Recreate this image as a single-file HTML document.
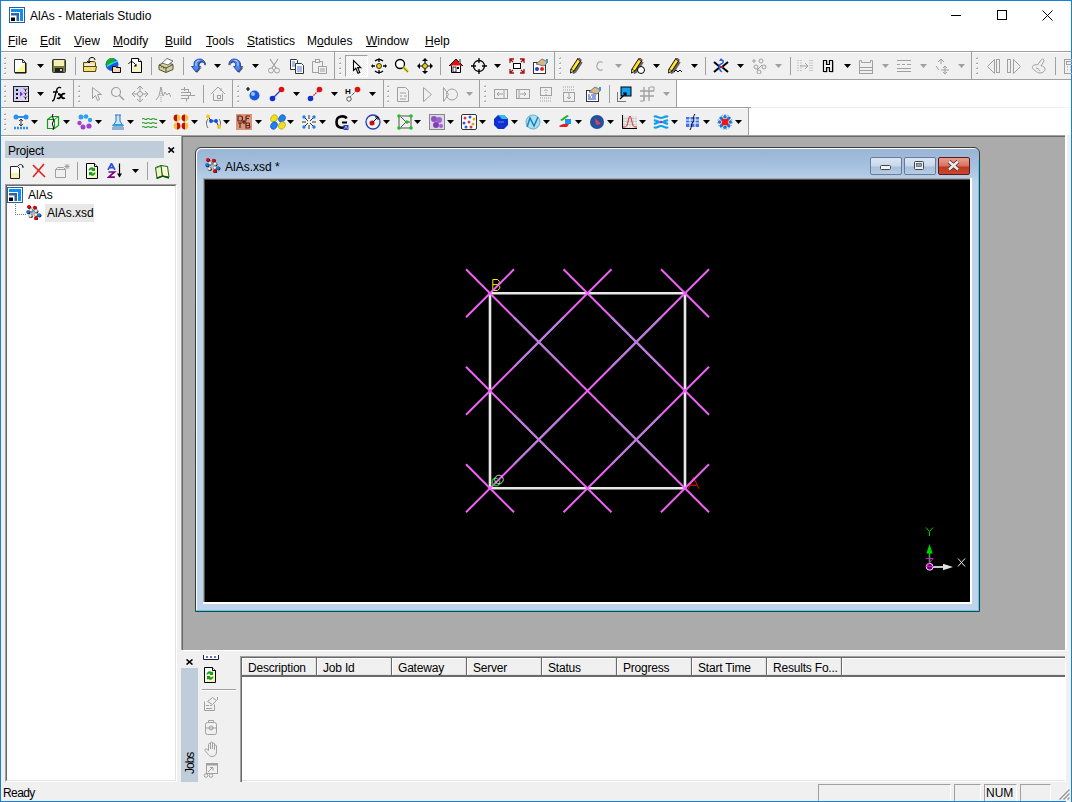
<!DOCTYPE html>
<html><head><meta charset="utf-8"><style>
html,body{margin:0;padding:0;width:1072px;height:802px;overflow:hidden;font-family:"Liberation Sans", sans-serif;}
u{text-decoration:underline;text-underline-offset:1px}
</style></head><body>
<div style="position:absolute;left:0px;top:0px;width:1072px;height:802px;background:#f0f0f0"></div><div style="position:absolute;left:1px;top:1px;width:1070px;height:50px;background:#fff"></div><div style="position:absolute;left:0px;top:0px;width:1072px;height:1px;background:#1a7fd6"></div><div style="position:absolute;left:0px;top:0px;width:1px;height:802px;background:#1a7fd6"></div><div style="position:absolute;left:1071px;top:0px;width:1px;height:802px;background:#1a7fd6"></div><div style="position:absolute;left:0px;top:801px;width:1072px;height:1px;background:#1a7fd6"></div><svg style="position:absolute;left:9px;top:7px;" width="16" height="16" viewBox="0 0 16 16"><rect x="0.5" y="0.5" width="15" height="15" fill="#fff" stroke="#2a5b9a"/><path d="M2 2H14V14H11V5H2Z" fill="#0e8ef2"/><path d="M2 6H10V14H7.5V8.5H2Z" fill="#2a64a8"/><path d="M2 10.5H6V14H2Z" fill="#000"/></svg><div style="position:absolute;left:30px;top:9px;font-size:12px;line-height:15px;color:#000;white-space:nowrap;">AlAs - Materials Studio</div><svg style="position:absolute;left:951px;top:9px;" width="12" height="12" viewBox="0 0 12 12"><path d="M0 6.5h10" stroke="#000" stroke-width="1"/></svg><svg style="position:absolute;left:997px;top:10px;" width="12" height="12" viewBox="0 0 12 12"><rect x="0.5" y="0.5" width="9" height="9" fill="none" stroke="#000"/></svg><svg style="position:absolute;left:1042px;top:10px;" width="12" height="12" viewBox="0 0 12 12"><path d="M0.5 0.5l10 10M10.5 0.5l-10 10" stroke="#000" stroke-width="1"/></svg><div style="position:absolute;left:8px;top:34px;font-size:12px;line-height:15px;color:#000;white-space:nowrap;"><u>F</u>ile</div><div style="position:absolute;left:40px;top:34px;font-size:12px;line-height:15px;color:#000;white-space:nowrap;"><u>E</u>dit</div><div style="position:absolute;left:74px;top:34px;font-size:12px;line-height:15px;color:#000;white-space:nowrap;"><u>V</u>iew</div><div style="position:absolute;left:113px;top:34px;font-size:12px;line-height:15px;color:#000;white-space:nowrap;"><u>M</u>odify</div><div style="position:absolute;left:165px;top:34px;font-size:12px;line-height:15px;color:#000;white-space:nowrap;"><u>B</u>uild</div><div style="position:absolute;left:206px;top:34px;font-size:12px;line-height:15px;color:#000;white-space:nowrap;"><u>T</u>ools</div><div style="position:absolute;left:247px;top:34px;font-size:12px;line-height:15px;color:#000;white-space:nowrap;"><u>S</u>tatistics</div><div style="position:absolute;left:307px;top:34px;font-size:12px;line-height:15px;color:#000;white-space:nowrap;">M<u>o</u>dules</div><div style="position:absolute;left:366px;top:34px;font-size:12px;line-height:15px;color:#000;white-space:nowrap;"><u>W</u>indow</div><div style="position:absolute;left:425px;top:34px;font-size:12px;line-height:15px;color:#000;white-space:nowrap;"><u>H</u>elp</div><div style="position:absolute;left:1px;top:51px;width:1070px;height:1px;background:#a0a0a0"></div><div style="position:absolute;left:1px;top:52px;width:1070px;height:27px;background:#f0f0f0"></div><div style="position:absolute;left:1px;top:79px;width:1070px;height:1px;background:#a0a0a0"></div><div style="position:absolute;left:1px;top:80px;width:1070px;height:27px;background:#fff"></div><div style="position:absolute;left:1px;top:80px;width:676px;height:27px;background:#f0f0f0"></div><div style="position:absolute;left:1px;top:107px;width:750px;height:1px;background:#a0a0a0"></div><div style="position:absolute;left:1px;top:108px;width:1070px;height:27px;background:#fff"></div><div style="position:absolute;left:1px;top:108px;width:748px;height:27px;background:#f0f0f0"></div><div style="position:absolute;left:1px;top:135px;width:1065px;height:1px;background:#a0a0a0"></div><div style="position:absolute;left:1066px;top:135px;width:5px;height:667px;background:#f0f0f0"></div><div style="position:absolute;left:1px;top:52px;width:1070px;height:1px;background:#fff"></div><div style="position:absolute;left:1px;top:108px;width:748px;height:1px;background:#fff"></div><svg style="position:absolute;left:4px;top:57px;" width="2" height="20" viewBox="0 0 2 20"><rect x="1" y="0" width="1" height="1" fill="#c8c8c8"/><rect x="0" y="1" width="2" height="1" fill="#a8a8a8"/><rect x="0" y="2" width="2" height="1" fill="#fff"/><rect x="1" y="5" width="1" height="1" fill="#c8c8c8"/><rect x="0" y="6" width="2" height="1" fill="#a8a8a8"/><rect x="0" y="7" width="2" height="1" fill="#fff"/><rect x="1" y="10" width="1" height="1" fill="#c8c8c8"/><rect x="0" y="11" width="2" height="1" fill="#a8a8a8"/><rect x="0" y="12" width="2" height="1" fill="#fff"/><rect x="1" y="15" width="1" height="1" fill="#c8c8c8"/><rect x="0" y="16" width="2" height="1" fill="#a8a8a8"/><rect x="0" y="17" width="2" height="1" fill="#fff"/></svg><svg style="position:absolute;left:13px;top:58px;" width="16" height="16" viewBox="0 0 16 16"><path d="M1.5 1.5h8l3 3v10h-11z" fill="#fff" stroke="#333" stroke-linejoin="round"/><path d="M2 14l10-9v9z" fill="#fafa90" opacity="0.9"/><path d="M9.5 1.5v3h3" fill="none" stroke="#333"/><path d="M2 15h11v-10" fill="none" stroke="#000"/></svg><svg style="position:absolute;left:37px;top:64px;" width="7" height="4" viewBox="0 0 7 4"><path d="M0 0h7l-3.5 4z" fill="#000"/></svg><svg style="position:absolute;left:51px;top:58px;" width="16" height="16" viewBox="0 0 16 16"><rect x="1.5" y="1.5" width="13" height="13" rx="1" fill="#7b7b3a" stroke="#333"/><rect x="3" y="2" width="10" height="6" fill="#f4f0b4"/><rect x="4" y="10" width="8" height="4" fill="#222"/><rect x="9" y="11" width="2" height="2" fill="#ccc"/></svg><div style="position:absolute;left:75px;top:57px;width:1px;height:18px;background:#a0a0a0"></div><svg style="position:absolute;left:82px;top:57px;" width="16" height="16" viewBox="0 0 16 16"><path d="M1.5 5.5h4l1 -1h6l1 1v9h-12z" fill="#e8d870" stroke="#5a4a00"/><path d="M2.5 6.5h10v7h-10z" fill="#f8e8e0"/><path d="M1.5 9.5h13l-1 5h-12z" fill="#f0e080" stroke="#5a4a00"/><path d="M5 4l2 2 2-2M7 6V3c0-1.5 1-2.5 3-2.5s3 1 3 2.5" fill="none" stroke="#000" stroke-width="1"/></svg><svg style="position:absolute;left:105px;top:57px;" width="16" height="16" viewBox="0 0 16 16"><circle cx="7" cy="7.5" r="6.5" fill="#1a5ae0"/><path d="M1.5 5c1.5-3 4-4.5 7-4 2 1 1.5 3-0.5 4s-2 3-4 4-2.5 1-2.5-1z" fill="#18b018"/><path d="M2 9c3-1 6-4 11-5" stroke="#20e0f0" stroke-width="1.5" fill="none"/><path d="M7.5 9.5h3l1 1h4v5h-8z" fill="#f8d8b0" stroke="#000"/></svg><svg style="position:absolute;left:128px;top:57px;" width="16" height="16" viewBox="0 0 16 16"><path d="M3.5 1.5h7l3 3v11h-10z" fill="#fff" stroke="#000"/><path d="M4 11l9-6v10h-9z" fill="#f4f0b0" opacity="0.7"/><path d="M10.5 1.5v3h3" fill="#fff" stroke="#000"/><path d="M0.5 7c1-2 3-3 5-1.5l2 2" stroke="#000" fill="none"/><path d="M5.5 9.5h3v-3z" fill="#000"/></svg><div style="position:absolute;left:151px;top:57px;width:1px;height:18px;background:#a0a0a0"></div><svg style="position:absolute;left:158px;top:57px;" width="16" height="16" viewBox="0 0 16 16"><path d="M1 8l6-3 8 2.5v5l-7 3-7-3z" fill="#d0d0a0" stroke="#505030"/><path d="M1 8l7 3 7-3.5M8 11v4" stroke="#505030" fill="none"/><path d="M4 6l5-4.5 6 2.5-5 4z" fill="#fff" stroke="#707070"/><rect x="3" y="9" width="1.5" height="1.5" fill="#20a020"/><rect x="5" y="10" width="1.5" height="1.5" fill="#e02020"/></svg><div style="position:absolute;left:183px;top:57px;width:1px;height:18px;background:#a0a0a0"></div><svg style="position:absolute;left:190px;top:58px;" width="16" height="16" viewBox="0 0 16 16"><path d="M1.5 8.5L6 14l4.5-5.5H8.5V6.5c0-2 1.5-3 3-3s3 1.5 3.5 3.5V5c-1-3-3-4-5-4S4 2 4 5.5v3z" transform="translate(1,1)" fill="#555"/><path d="M1.5 8.5L6 14l4.5-5.5H8.5V6.5c0-2 1.5-3 3-3s3 1.5 3.5 3.5V5c-1-3-3-4-5-4S4 2 4 5.5v3z" fill="#4a86f0" stroke="#1a3aa0" stroke-width="0.8"/><path d="M6 8V5.5c0-2 1.5-3 3.5-3" stroke="#c8dcff" fill="none"/></svg><svg style="position:absolute;left:214px;top:64px;" width="7" height="4" viewBox="0 0 7 4"><path d="M0 0h7l-3.5 4z" fill="#000"/></svg><svg style="position:absolute;left:228px;top:58px;" width="16" height="16" viewBox="0 0 16 16"><g transform="translate(16,0) scale(-1,1)"><path d="M1.5 8.5L6 14l4.5-5.5H8.5V6.5c0-2 1.5-3 3-3s3 1.5 3.5 3.5V5c-1-3-3-4-5-4S4 2 4 5.5v3z" transform="translate(-1,1)" fill="#555"/><path d="M1.5 8.5L6 14l4.5-5.5H8.5V6.5c0-2 1.5-3 3-3s3 1.5 3.5 3.5V5c-1-3-3-4-5-4S4 2 4 5.5v3z" fill="#4a86f0" stroke="#1a3aa0" stroke-width="0.8"/><path d="M6 8V5.5c0-2 1.5-3 3.5-3" stroke="#c8dcff" fill="none"/></g></svg><svg style="position:absolute;left:252px;top:64px;" width="7" height="4" viewBox="0 0 7 4"><path d="M0 0h7l-3.5 4z" fill="#000"/></svg><svg style="position:absolute;left:266px;top:58px;" width="16" height="16" viewBox="0 0 16 16"><path d="M4 1l6 9M12 1l-6 9" stroke="#a0a0a0" stroke-width="1.2"/><circle cx="5" cy="12.5" r="2.5" fill="none" stroke="#a0a0a0"/><circle cx="11" cy="12.5" r="2.5" fill="none" stroke="#a0a0a0"/></svg><svg style="position:absolute;left:289px;top:58px;" width="16" height="16" viewBox="0 0 16 16"><path d="M1.5 1.5h6l1 1v9h-7z" fill="#fff" stroke="#333"/><path d="M6.5 5.5h6l2 2v8h-8z" fill="#fff" stroke="#333"/><path d="M3 4h3M3 6h3M3 8h3M8 9h5M8 11h5M8 13h5" stroke="#4a7ad0"/></svg><svg style="position:absolute;left:311px;top:58px;" width="16" height="16" viewBox="0 0 16 16"><path d="M1.5 3.5h10v11h-10z" fill="none" stroke="#a0a0a0"/><rect x="4.5" y="1.5" width="4" height="3" fill="#f0f0f0" stroke="#a0a0a0"/><path d="M7.5 8.5h8v7h-8z" fill="#f0f0f0" stroke="#a0a0a0"/><path d="M9 11h5M9 13h5" stroke="#a0a0a0"/></svg><div style="position:absolute;left:334px;top:52px;width:1px;height:27px;background:#a0a0a0"></div><svg style="position:absolute;left:339px;top:57px;" width="2" height="20" viewBox="0 0 2 20"><rect x="1" y="0" width="1" height="1" fill="#c8c8c8"/><rect x="0" y="1" width="2" height="1" fill="#a8a8a8"/><rect x="0" y="2" width="2" height="1" fill="#fff"/><rect x="1" y="5" width="1" height="1" fill="#c8c8c8"/><rect x="0" y="6" width="2" height="1" fill="#a8a8a8"/><rect x="0" y="7" width="2" height="1" fill="#fff"/><rect x="1" y="10" width="1" height="1" fill="#c8c8c8"/><rect x="0" y="11" width="2" height="1" fill="#a8a8a8"/><rect x="0" y="12" width="2" height="1" fill="#fff"/><rect x="1" y="15" width="1" height="1" fill="#c8c8c8"/><rect x="0" y="16" width="2" height="1" fill="#a8a8a8"/><rect x="0" y="17" width="2" height="1" fill="#fff"/></svg><div style="position:absolute;left:345px;top:55px;width:23px;height:22px;background:repeating-conic-gradient(#fff 0 25%,#ececec 0 50%) 0 0/2px 2px;border-left:1px solid #a0a0a0;border-top:1px solid #a0a0a0;border-right:1px solid #fff;border-bottom:1px solid #fff;box-sizing:border-box"></div><svg style="position:absolute;left:349px;top:58px;" width="16" height="16" viewBox="0 0 16 16"><path d="M4.5 2.5V12.5L6.8 10.3L9 15.2L10.8 14.4L8.6 9.6H11.8Z" fill="#fff" stroke="#000" stroke-width="1.1" stroke-linejoin="miter"/></svg><svg style="position:absolute;left:371px;top:58px;" width="16" height="16" viewBox="0 0 16 16"><circle cx="8" cy="8" r="2.5" fill="#f0d000" stroke="#333"/><path d="M8 1v3M8 12v3M1 8h3M12 8h3M4 3a6 6 0 0 1 8 0M4 13a6 6 0 0 0 8 0" fill="none" stroke="#000" stroke-width="1.3"/><path d="M6 2l2-2 2 2M6 14l2 2 2-2M2 6l-2 2 2 2M14 6l2 2-2 2" fill="#000"/></svg><svg style="position:absolute;left:394px;top:58px;" width="16" height="16" viewBox="0 0 16 16"><circle cx="6" cy="6" r="4.5" fill="#fff" stroke="#000" stroke-width="1.3"/><path d="M9 9l5 5" stroke="#d8c800" stroke-width="2.5"/><path d="M9 9l5 5" stroke="#444" stroke-width="0.6"/></svg><svg style="position:absolute;left:417px;top:58px;" width="16" height="16" viewBox="0 0 16 16"><path d="M8 1v14M1 8h14" stroke="#000" stroke-width="1.2"/><path d="M5 3l3-3 3 3zM5 13l3 3 3-3zM3 5l-3 3 3 3zM13 5l3 3-3 3z" fill="#000"/><circle cx="8" cy="8" r="2.5" fill="#f0d000" stroke="#333"/></svg><div style="position:absolute;left:440px;top:57px;width:1px;height:18px;background:#a0a0a0"></div><svg style="position:absolute;left:448px;top:58px;" width="16" height="16" viewBox="0 0 16 16"><path d="M1 8l7-7 7 7" fill="#e01010" stroke="#000"/><path d="M3.5 7.5v7h9v-7" fill="#fff" stroke="#000"/><rect x="5" y="9" width="3" height="5" fill="#fff" stroke="#000" stroke-width="0.8"/><rect x="9" y="9" width="2" height="2" fill="#000"/><rect x="11" y="1" width="2" height="4" fill="#888"/></svg><svg style="position:absolute;left:471px;top:58px;" width="16" height="16" viewBox="0 0 16 16"><circle cx="8" cy="8" r="5.5" fill="none" stroke="#000" stroke-width="1.3"/><path d="M8 0v5M8 11v5M0 8h5M11 8h5" stroke="#000" stroke-width="1.3"/></svg><svg style="position:absolute;left:494px;top:64px;" width="7" height="4" viewBox="0 0 7 4"><path d="M0 0h7l-3.5 4z" fill="#000"/></svg><svg style="position:absolute;left:509px;top:58px;" width="16" height="16" viewBox="0 0 16 16"><path d="M1 5V1h4M11 1h4v4M15 11v4h-4M5 15H1v-4M1 1l3 3M15 1l-3 3M15 15l-3-3M1 15l3-3" fill="none" stroke="#a01010" stroke-width="1.3"/><rect x="4.5" y="5.5" width="7" height="5" fill="#fff" stroke="#000"/></svg><svg style="position:absolute;left:532px;top:58px;" width="16" height="16" viewBox="0 0 16 16"><rect x="1.5" y="4.5" width="12" height="11" fill="#fff" stroke="#333"/><path d="M4 6l6-5 6 3-4 4z" fill="#d8b880" stroke="#777"/><circle cx="5" cy="11" r="2" fill="#2040d0"/><circle cx="10" cy="11" r="2" fill="#e02020"/><rect x="14" y="1" width="2" height="4" fill="#2aa0e0"/></svg><div style="position:absolute;left:554px;top:52px;width:1px;height:27px;background:#a0a0a0"></div><svg style="position:absolute;left:559px;top:57px;" width="2" height="20" viewBox="0 0 2 20"><rect x="1" y="0" width="1" height="1" fill="#c8c8c8"/><rect x="0" y="1" width="2" height="1" fill="#a8a8a8"/><rect x="0" y="2" width="2" height="1" fill="#fff"/><rect x="1" y="5" width="1" height="1" fill="#c8c8c8"/><rect x="0" y="6" width="2" height="1" fill="#a8a8a8"/><rect x="0" y="7" width="2" height="1" fill="#fff"/><rect x="1" y="10" width="1" height="1" fill="#c8c8c8"/><rect x="0" y="11" width="2" height="1" fill="#a8a8a8"/><rect x="0" y="12" width="2" height="1" fill="#fff"/><rect x="1" y="15" width="1" height="1" fill="#c8c8c8"/><rect x="0" y="16" width="2" height="1" fill="#a8a8a8"/><rect x="0" y="17" width="2" height="1" fill="#fff"/></svg><svg style="position:absolute;left:568px;top:58px;" width="16" height="16" viewBox="0 0 16 16"><path d="M4 12L10.5 2l3 2L7 14l-3.5 2z" fill="#666" transform="translate(1.2,0.5)"/><path d="M3 11L9.5 1l3 2L6 13l-3.5 2z" fill="#f8d800" stroke="#000" stroke-width="0.9"/><path d="M9.5 1l3 2 0.8-1.2-3-2z" fill="#f060b0" stroke="#000" stroke-width="0.6"/><path d="M3 11l3 2-3.5 2z" fill="#f4e0a0" stroke="#000" stroke-width="0.6"/><path d="M5 11.5L11 2.5" stroke="#fff6a0" stroke-width="0.8"/></svg><svg style="position:absolute;left:593px;top:58px;" width="16" height="16" viewBox="0 0 16 16"><path d="M9.5 4.5c-1-1-4-1.5-5 1s-0.5 5 1 6 3 1 4 0" fill="none" stroke="#a0a0a0" stroke-width="1.1"/></svg><svg style="position:absolute;left:615px;top:64px;" width="7" height="4" viewBox="0 0 7 4"><path d="M0 0h7l-3.5 4z" fill="#a0a0a0"/></svg><svg style="position:absolute;left:629px;top:58px;" width="16" height="16" viewBox="0 0 16 16"><path d="M4 12L10.5 2l3 2L7 14l-3.5 2z" fill="#666" transform="translate(1.2,0.5)"/><path d="M3 11L9.5 1l3 2L6 13l-3.5 2z" fill="#f8d800" stroke="#000" stroke-width="0.9"/><path d="M9.5 1l3 2 0.8-1.2-3-2z" fill="#f060b0" stroke="#000" stroke-width="0.6"/><path d="M3 11l3 2-3.5 2z" fill="#f4e0a0" stroke="#000" stroke-width="0.6"/><path d="M5 11.5L11 2.5" stroke="#fff6a0" stroke-width="0.8"/><circle cx="12" cy="12" r="3.5" fill="#fff" stroke="#000"/></svg><svg style="position:absolute;left:653px;top:64px;" width="7" height="4" viewBox="0 0 7 4"><path d="M0 0h7l-3.5 4z" fill="#000"/></svg><svg style="position:absolute;left:666px;top:58px;" width="16" height="16" viewBox="0 0 16 16"><path d="M4 12L10.5 2l3 2L7 14l-3.5 2z" fill="#666" transform="translate(1.2,0.5)"/><path d="M3 11L9.5 1l3 2L6 13l-3.5 2z" fill="#f8d800" stroke="#000" stroke-width="0.9"/><path d="M9.5 1l3 2 0.8-1.2-3-2z" fill="#f060b0" stroke="#000" stroke-width="0.6"/><path d="M3 11l3 2-3.5 2z" fill="#f4e0a0" stroke="#000" stroke-width="0.6"/><path d="M5 11.5L11 2.5" stroke="#fff6a0" stroke-width="0.8"/><path d="M8 14l2-2 2 2 2-2 2 2" fill="none" stroke="#000"/></svg><svg style="position:absolute;left:691px;top:64px;" width="7" height="4" viewBox="0 0 7 4"><path d="M0 0h7l-3.5 4z" fill="#000"/></svg><div style="position:absolute;left:705px;top:57px;width:1px;height:18px;background:#a0a0a0"></div><svg style="position:absolute;left:713px;top:58px;" width="16" height="16" viewBox="0 0 16 16"><path d="M1 4l6 5-6 5M15 4l-6 5 6 5" stroke="#000" stroke-width="2" fill="none"/><path d="M6 9h4" stroke="#e02020" stroke-width="1.5"/><path d="M8 2c3 0 3 3 0 4s-2 6 1 8" stroke="#2060e0" stroke-width="1.5" fill="none"/><path d="M6 3l2-3 2 3z" fill="#2060e0"/></svg><svg style="position:absolute;left:737px;top:64px;" width="7" height="4" viewBox="0 0 7 4"><path d="M0 0h7l-3.5 4z" fill="#000"/></svg><svg style="position:absolute;left:751px;top:58px;" width="16" height="16" viewBox="0 0 16 16"><path d="M1 3h4M3 1v4" stroke="#a0a0a0"/><circle cx="10" cy="3" r="2" fill="none" stroke="#a0a0a0"/><circle cx="5" cy="9" r="2" fill="none" stroke="#a0a0a0"/><circle cx="13" cy="9" r="2" fill="none" stroke="#a0a0a0"/><circle cx="8" cy="14" r="2" fill="none" stroke="#a0a0a0"/><path d="M6 12l5-5" stroke="#a0a0a0"/></svg><svg style="position:absolute;left:775px;top:64px;" width="7" height="4" viewBox="0 0 7 4"><path d="M0 0h7l-3.5 4z" fill="#a0a0a0"/></svg><div style="position:absolute;left:790px;top:57px;width:1px;height:18px;background:#a0a0a0"></div><svg style="position:absolute;left:797px;top:58px;" width="16" height="16" viewBox="0 0 16 16"><path d="M1 2v12M4 2v12M13 2v12M15 2v12" stroke="#a0a0a0" stroke-dasharray="1 1.5"/><path d="M3 8h8M8 5l3 3-3 3" stroke="#a0a0a0" fill="none"/></svg><svg style="position:absolute;left:820px;top:58px;" width="16" height="16" viewBox="0 0 16 16"><path d="M3.5 2.5h3v4h3v-4h3v11h-3v-4h-3v4h-3z" fill="#555" transform="translate(0.8,0.8)"/><path d="M3.5 2.5h3v4h3v-4h3v11h-3v-4h-3v4h-3z" fill="#fff" stroke="#000" stroke-width="1.2"/></svg><svg style="position:absolute;left:844px;top:64px;" width="7" height="4" viewBox="0 0 7 4"><path d="M0 0h7l-3.5 4z" fill="#000"/></svg><svg style="position:absolute;left:858px;top:58px;" width="16" height="16" viewBox="0 0 16 16"><path d="M1.5 9.5v-7h2v2h9v-2h2v7z" fill="none" stroke="#a0a0a0"/><path d="M1 12.5h14" stroke="#a0a0a0"/><rect x="1.5" y="9.5" width="13" height="6" fill="none" stroke="#a0a0a0"/></svg><svg style="position:absolute;left:882px;top:64px;" width="7" height="4" viewBox="0 0 7 4"><path d="M0 0h7l-3.5 4z" fill="#a0a0a0"/></svg><svg style="position:absolute;left:896px;top:58px;" width="16" height="16" viewBox="0 0 16 16"><path d="M1 2.5h14M1 6.5h3M6 6.5h3M11 6.5h4M1 10.5h14M1 13.5h14" stroke="#a0a0a0"/></svg><svg style="position:absolute;left:920px;top:64px;" width="7" height="4" viewBox="0 0 7 4"><path d="M0 0h7l-3.5 4z" fill="#a0a0a0"/></svg><svg style="position:absolute;left:935px;top:58px;" width="16" height="16" viewBox="0 0 16 16"><path d="M3 4l3-3 3 3M6 1v5M1 8l3 4M10 9v7M6 12h8M8 10l2-2 2 2M8 14l2 2 2-2" fill="none" stroke="#a0a0a0"/></svg><svg style="position:absolute;left:958px;top:64px;" width="7" height="4" viewBox="0 0 7 4"><path d="M0 0h7l-3.5 4z" fill="#a0a0a0"/></svg><div style="position:absolute;left:971px;top:52px;width:1px;height:27px;background:#a0a0a0"></div><svg style="position:absolute;left:976px;top:57px;" width="2" height="20" viewBox="0 0 2 20"><rect x="1" y="0" width="1" height="1" fill="#c8c8c8"/><rect x="0" y="1" width="2" height="1" fill="#a8a8a8"/><rect x="0" y="2" width="2" height="1" fill="#fff"/><rect x="1" y="5" width="1" height="1" fill="#c8c8c8"/><rect x="0" y="6" width="2" height="1" fill="#a8a8a8"/><rect x="0" y="7" width="2" height="1" fill="#fff"/><rect x="1" y="10" width="1" height="1" fill="#c8c8c8"/><rect x="0" y="11" width="2" height="1" fill="#a8a8a8"/><rect x="0" y="12" width="2" height="1" fill="#fff"/><rect x="1" y="15" width="1" height="1" fill="#c8c8c8"/><rect x="0" y="16" width="2" height="1" fill="#a8a8a8"/><rect x="0" y="17" width="2" height="1" fill="#fff"/></svg><svg style="position:absolute;left:986px;top:58px;" width="16" height="16" viewBox="0 0 16 16"><path d="M8.5 1.5l-7 7 7 7z" fill="none" stroke="#a0a0a0"/><rect x="10.5" y="1.5" width="3" height="13" fill="none" stroke="#a0a0a0"/></svg><svg style="position:absolute;left:1006px;top:58px;" width="16" height="16" viewBox="0 0 16 16"><rect x="1.5" y="1.5" width="3" height="13" fill="none" stroke="#a0a0a0"/><path d="M7.5 1.5l7 7-7 7z" fill="none" stroke="#a0a0a0"/></svg><svg style="position:absolute;left:1031px;top:58px;" width="16" height="16" viewBox="0 0 16 16"><path d="M1.5 8.5c1-2 3-2 5-1.5l4-5.5c1-1 3 0 2.5 1.5l-3 5c2 0 4 1 4 3s-2 4-5 4c-2 0-3-1-5-2.5s-3-2-2.5-4z" fill="none" stroke="#a0a0a0"/><path d="M5 10c1 0 3 1 4 3" stroke="#a0a0a0" fill="none"/></svg><div style="position:absolute;left:1055px;top:57px;width:1px;height:18px;background:#a0a0a0"></div><svg style="position:absolute;left:1063px;top:58px;" width="16" height="16" viewBox="0 0 16 16"><rect x="1.5" y="1.5" width="12" height="14" fill="none" stroke="#a0a0a0"/><rect x="3.5" y="3.5" width="8" height="3" fill="none" stroke="#a0a0a0"/><path d="M4 9h1M7 9h1M10 9h1M4 12h1M7 12h1M10 12h1" stroke="#a0a0a0"/></svg><svg style="position:absolute;left:4px;top:85px;" width="2" height="20" viewBox="0 0 2 20"><rect x="1" y="0" width="1" height="1" fill="#c8c8c8"/><rect x="0" y="1" width="2" height="1" fill="#a8a8a8"/><rect x="0" y="2" width="2" height="1" fill="#fff"/><rect x="1" y="5" width="1" height="1" fill="#c8c8c8"/><rect x="0" y="6" width="2" height="1" fill="#a8a8a8"/><rect x="0" y="7" width="2" height="1" fill="#fff"/><rect x="1" y="10" width="1" height="1" fill="#c8c8c8"/><rect x="0" y="11" width="2" height="1" fill="#a8a8a8"/><rect x="0" y="12" width="2" height="1" fill="#fff"/><rect x="1" y="15" width="1" height="1" fill="#c8c8c8"/><rect x="0" y="16" width="2" height="1" fill="#a8a8a8"/><rect x="0" y="17" width="2" height="1" fill="#fff"/></svg><svg style="position:absolute;left:13px;top:86px;" width="16" height="16" viewBox="0 0 16 16"><defs><linearGradient id="xyg" x1="0" y1="0" x2="1" y2="1"><stop offset="0" stop-color="#b8c8f8"/><stop offset="1" stop-color="#f0d8f0"/></linearGradient></defs><rect x="0.5" y="0.5" width="15" height="15" fill="url(#xyg)" stroke="#222"/><path d="M2 15.5h14V1" stroke="#000" fill="none"/><path d="M3 3l2 2m0-2l-2 2M3 7l2 2m0-2l-2 2M3 11l2 2m0-2l-2 2" stroke="#000" stroke-width="0.9" fill="none"/><path d="M11 2.5l1.5 1.5 1.5-1.5M12.5 4v1.5M11 6.5l1.5 1.5 1.5-1.5M12.5 8v1.5M11 10.5l1.5 1.5 1.5-1.5M12.5 12v1.5" stroke="#000" stroke-width="0.9" fill="none"/><path d="M7 5.5l3 2.5-3 2.5z" fill="#8020e0"/></svg><svg style="position:absolute;left:37px;top:92px;" width="7" height="4" viewBox="0 0 7 4"><path d="M0 0h7l-3.5 4z" fill="#000"/></svg><svg style="position:absolute;left:50px;top:86px;" width="16" height="16" viewBox="0 0 16 16"><path d="M2 15c2 0 2-1 3-5l2-7c1-2 3-2 4-1M3 6h5" fill="none" stroke="#000" stroke-width="1.4"/><path d="M8 8c1 0 2 0 3 2s2 3 4 2M15 8c-1-1-3 0-4 2s-2 3-4 2" stroke="#000" stroke-width="1.8" fill="none"/></svg><div style="position:absolute;left:73px;top:80px;width:1px;height:27px;background:#a0a0a0"></div><svg style="position:absolute;left:78px;top:85px;" width="2" height="20" viewBox="0 0 2 20"><rect x="1" y="0" width="1" height="1" fill="#c8c8c8"/><rect x="0" y="1" width="2" height="1" fill="#a8a8a8"/><rect x="0" y="2" width="2" height="1" fill="#fff"/><rect x="1" y="5" width="1" height="1" fill="#c8c8c8"/><rect x="0" y="6" width="2" height="1" fill="#a8a8a8"/><rect x="0" y="7" width="2" height="1" fill="#fff"/><rect x="1" y="10" width="1" height="1" fill="#c8c8c8"/><rect x="0" y="11" width="2" height="1" fill="#a8a8a8"/><rect x="0" y="12" width="2" height="1" fill="#fff"/><rect x="1" y="15" width="1" height="1" fill="#c8c8c8"/><rect x="0" y="16" width="2" height="1" fill="#a8a8a8"/><rect x="0" y="17" width="2" height="1" fill="#fff"/></svg><svg style="position:absolute;left:89px;top:86px;" width="16" height="16" viewBox="0 0 16 16"><path d="M3.5 1.5v11l3-3 2 5 2-1-2-5h4z" fill="none" stroke="#a0a0a0"/></svg><svg style="position:absolute;left:110px;top:86px;" width="16" height="16" viewBox="0 0 16 16"><circle cx="6" cy="6" r="4.5" fill="none" stroke="#a0a0a0" stroke-width="1.2"/><path d="M9 9l5 5" stroke="#a0a0a0" stroke-width="1.5"/></svg><svg style="position:absolute;left:132px;top:86px;" width="16" height="16" viewBox="0 0 16 16"><path d="M8 1v14M1 8h14" stroke="#a0a0a0"/><path d="M5 3l3-3 3 3M5 13l3 3 3-3M3 5l-3 3 3 3M13 5l3 3-3 3" fill="none" stroke="#a0a0a0"/><circle cx="8" cy="8" r="2.5" fill="#f0f0f0" stroke="#a0a0a0"/></svg><svg style="position:absolute;left:155px;top:86px;" width="16" height="16" viewBox="0 0 16 16"><path d="M1 14l3-4 2-9 2 9 2-4 2 3 2-2 2 4" fill="none" stroke="#a0a0a0"/><path d="M6 1v15" stroke="#a0a0a0" stroke-dasharray="1 1"/></svg><svg style="position:absolute;left:180px;top:86px;" width="16" height="16" viewBox="0 0 16 16"><path d="M4.5 1v4M1 3.5h8M8.5 3.5v3M1 6.5h10M10.5 6.5v3M1 9.5h14M1 12.5h8M8.5 9.5v3M6.5 12.5v3" stroke="#a0a0a0" fill="none"/></svg><div style="position:absolute;left:203px;top:85px;width:1px;height:18px;background:#a0a0a0"></div><svg style="position:absolute;left:210px;top:86px;" width="16" height="16" viewBox="0 0 16 16"><path d="M1 8l7-7 7 7" fill="none" stroke="#a0a0a0"/><path d="M3.5 7.5v7h9v-7" fill="none" stroke="#a0a0a0"/><rect x="7.5" y="9.5" width="3" height="3" fill="none" stroke="#a0a0a0"/><path d="M11 2v3" stroke="#a0a0a0"/></svg><div style="position:absolute;left:232px;top:80px;width:1px;height:27px;background:#a0a0a0"></div><svg style="position:absolute;left:237px;top:85px;" width="2" height="20" viewBox="0 0 2 20"><rect x="1" y="0" width="1" height="1" fill="#c8c8c8"/><rect x="0" y="1" width="2" height="1" fill="#a8a8a8"/><rect x="0" y="2" width="2" height="1" fill="#fff"/><rect x="1" y="5" width="1" height="1" fill="#c8c8c8"/><rect x="0" y="6" width="2" height="1" fill="#a8a8a8"/><rect x="0" y="7" width="2" height="1" fill="#fff"/><rect x="1" y="10" width="1" height="1" fill="#c8c8c8"/><rect x="0" y="11" width="2" height="1" fill="#a8a8a8"/><rect x="0" y="12" width="2" height="1" fill="#fff"/><rect x="1" y="15" width="1" height="1" fill="#c8c8c8"/><rect x="0" y="16" width="2" height="1" fill="#a8a8a8"/><rect x="0" y="17" width="2" height="1" fill="#fff"/></svg><svg style="position:absolute;left:245px;top:86px;" width="16" height="16" viewBox="0 0 16 16"><path d="M1 3h4M3 1v4" stroke="#000" stroke-width="1.2"/><circle cx="9.5" cy="9.5" r="5" fill="#1a5ad8"/><circle cx="8" cy="8" r="2" fill="#9ac0ff"/></svg><svg style="position:absolute;left:269px;top:86px;" width="16" height="16" viewBox="0 0 16 16"><path d="M3 13L13 3" stroke="#2040c0" stroke-width="1.3"/><circle cx="3.5" cy="12.5" r="2.8" fill="#1030d0"/><circle cx="12.5" cy="3.5" r="2.8" fill="#e01010"/></svg><svg style="position:absolute;left:293px;top:92px;" width="7" height="4" viewBox="0 0 7 4"><path d="M0 0h7l-3.5 4z" fill="#000"/></svg><svg style="position:absolute;left:307px;top:86px;" width="16" height="16" viewBox="0 0 16 16"><path d="M3 13L13 3" stroke="#e01010" stroke-width="1.3" stroke-dasharray="1.5 1"/><circle cx="3.5" cy="12.5" r="2.8" fill="#1030d0"/><circle cx="12.5" cy="3.5" r="2.8" fill="#e01010"/></svg><svg style="position:absolute;left:331px;top:92px;" width="7" height="4" viewBox="0 0 7 4"><path d="M0 0h7l-3.5 4z" fill="#000"/></svg><svg style="position:absolute;left:345px;top:86px;" width="16" height="16" viewBox="0 0 16 16"><text x="0" y="8" font-family="Liberation Sans" font-weight="bold" font-size="8" fill="#000">H</text><path d="M4 12l8-8" stroke="#000" stroke-dasharray="1 1"/><circle cx="4" cy="13" r="2.2" fill="#fff" stroke="#555"/><circle cx="12.5" cy="3.5" r="2.8" fill="#e01010"/></svg><svg style="position:absolute;left:369px;top:92px;" width="7" height="4" viewBox="0 0 7 4"><path d="M0 0h7l-3.5 4z" fill="#000"/></svg><div style="position:absolute;left:383px;top:80px;width:1px;height:27px;background:#a0a0a0"></div><svg style="position:absolute;left:387px;top:85px;" width="2" height="20" viewBox="0 0 2 20"><rect x="1" y="0" width="1" height="1" fill="#c8c8c8"/><rect x="0" y="1" width="2" height="1" fill="#a8a8a8"/><rect x="0" y="2" width="2" height="1" fill="#fff"/><rect x="1" y="5" width="1" height="1" fill="#c8c8c8"/><rect x="0" y="6" width="2" height="1" fill="#a8a8a8"/><rect x="0" y="7" width="2" height="1" fill="#fff"/><rect x="1" y="10" width="1" height="1" fill="#c8c8c8"/><rect x="0" y="11" width="2" height="1" fill="#a8a8a8"/><rect x="0" y="12" width="2" height="1" fill="#fff"/><rect x="1" y="15" width="1" height="1" fill="#c8c8c8"/><rect x="0" y="16" width="2" height="1" fill="#a8a8a8"/><rect x="0" y="17" width="2" height="1" fill="#fff"/></svg><svg style="position:absolute;left:396px;top:86px;" width="16" height="16" viewBox="0 0 16 16"><path d="M1.5 1.5h8l3 3v11h-11z" fill="none" stroke="#a0a0a0"/><path d="M4 7h6M4 10h2M8 10h3M4 13h6" stroke="#a0a0a0"/></svg><svg style="position:absolute;left:420px;top:86px;" width="16" height="16" viewBox="0 0 16 16"><path d="M3.5 1.5l8 7-8 7z" fill="none" stroke="#a0a0a0"/></svg><svg style="position:absolute;left:442px;top:86px;" width="16" height="16" viewBox="0 0 16 16"><path d="M1.5 1.5v14l5-7z" fill="none" stroke="#a0a0a0"/><circle cx="10" cy="8.5" r="5.5" fill="none" stroke="#a0a0a0"/></svg><svg style="position:absolute;left:466px;top:92px;" width="7" height="4" viewBox="0 0 7 4"><path d="M0 0h7l-3.5 4z" fill="#a0a0a0"/></svg><div style="position:absolute;left:479px;top:80px;width:1px;height:27px;background:#a0a0a0"></div><svg style="position:absolute;left:484px;top:85px;" width="2" height="20" viewBox="0 0 2 20"><rect x="1" y="0" width="1" height="1" fill="#c8c8c8"/><rect x="0" y="1" width="2" height="1" fill="#a8a8a8"/><rect x="0" y="2" width="2" height="1" fill="#fff"/><rect x="1" y="5" width="1" height="1" fill="#c8c8c8"/><rect x="0" y="6" width="2" height="1" fill="#a8a8a8"/><rect x="0" y="7" width="2" height="1" fill="#fff"/><rect x="1" y="10" width="1" height="1" fill="#c8c8c8"/><rect x="0" y="11" width="2" height="1" fill="#a8a8a8"/><rect x="0" y="12" width="2" height="1" fill="#fff"/><rect x="1" y="15" width="1" height="1" fill="#c8c8c8"/><rect x="0" y="16" width="2" height="1" fill="#a8a8a8"/><rect x="0" y="17" width="2" height="1" fill="#fff"/></svg><svg style="position:absolute;left:493px;top:86px;" width="16" height="16" viewBox="0 0 16 16"><rect x="1.5" y="3.5" width="13" height="9" fill="none" stroke="#a0a0a0"/><path d="M4 8h6M6 6l-2 2 2 2M11 3v10" stroke="#a0a0a0" fill="none"/></svg><svg style="position:absolute;left:515px;top:86px;" width="16" height="16" viewBox="0 0 16 16"><rect x="1.5" y="3.5" width="13" height="9" fill="none" stroke="#a0a0a0"/><path d="M5 8h6M9 6l2 2-2 2M4 3v10" stroke="#a0a0a0" fill="none"/></svg><svg style="position:absolute;left:538px;top:86px;" width="16" height="16" viewBox="0 0 16 16"><rect x="2.5" y="1.5" width="11" height="8" fill="none" stroke="#a0a0a0"/><path d="M8 9V3M6 5l2-2 2 2M2 12h12M2 15h12" stroke="#a0a0a0" fill="none" stroke-dasharray="1 1"/></svg><svg style="position:absolute;left:561px;top:86px;" width="16" height="16" viewBox="0 0 16 16"><path d="M2 1h12M2 4h12" stroke="#a0a0a0" stroke-dasharray="1 1"/><rect x="2.5" y="6.5" width="11" height="9" fill="none" stroke="#a0a0a0"/><path d="M8 7v6M6 11l2 2 2-2" stroke="#a0a0a0" fill="none"/></svg><svg style="position:absolute;left:585px;top:86px;" width="16" height="16" viewBox="0 0 16 16"><rect x="1.5" y="4.5" width="12" height="11" fill="#fff" stroke="#333"/><path d="M4 6l6-5 6 3-4 4z" fill="#d8b880" stroke="#777"/><path d="M3 9h2M6 9h5M3 11h3M7 11h4M3 13h8" stroke="#2040d0"/><rect x="14" y="1" width="2" height="4" fill="#2aa0e0"/></svg><div style="position:absolute;left:609px;top:85px;width:1px;height:18px;background:#a0a0a0"></div><svg style="position:absolute;left:616px;top:86px;" width="16" height="16" viewBox="0 0 16 16"><rect x="5" y="1" width="10" height="9" fill="#10a0f0" stroke="#000"/><path d="M1.5 6.5v9h9" fill="none" stroke="#000" stroke-dasharray="1 1"/><path d="M4 13l6-6M7 7h3v3" stroke="#000" stroke-width="1.2" fill="none"/></svg><svg style="position:absolute;left:639px;top:86px;" width="16" height="16" viewBox="0 0 16 16"><path d="M1 5h14M1 10h14M5 1v14M10 1v14" stroke="#a0a0a0" stroke-width="1.3"/><path d="M11 1h4v4M1 15h4v-4" stroke="#a0a0a0" fill="none"/></svg><svg style="position:absolute;left:663px;top:92px;" width="7" height="4" viewBox="0 0 7 4"><path d="M0 0h7l-3.5 4z" fill="#a0a0a0"/></svg><div style="position:absolute;left:676px;top:80px;width:1px;height:27px;background:#a0a0a0"></div><svg style="position:absolute;left:4px;top:113px;" width="2" height="20" viewBox="0 0 2 20"><rect x="1" y="0" width="1" height="1" fill="#c8c8c8"/><rect x="0" y="1" width="2" height="1" fill="#a8a8a8"/><rect x="0" y="2" width="2" height="1" fill="#fff"/><rect x="1" y="5" width="1" height="1" fill="#c8c8c8"/><rect x="0" y="6" width="2" height="1" fill="#a8a8a8"/><rect x="0" y="7" width="2" height="1" fill="#fff"/><rect x="1" y="10" width="1" height="1" fill="#c8c8c8"/><rect x="0" y="11" width="2" height="1" fill="#a8a8a8"/><rect x="0" y="12" width="2" height="1" fill="#fff"/><rect x="1" y="15" width="1" height="1" fill="#c8c8c8"/><rect x="0" y="16" width="2" height="1" fill="#a8a8a8"/><rect x="0" y="17" width="2" height="1" fill="#fff"/></svg><svg style="position:absolute;left:13px;top:114px;" width="16" height="16" viewBox="0 0 16 16"><circle cx="3" cy="3" r="2.5" fill="#2a90f0"/><circle cx="13" cy="3" r="2.5" fill="#2a90f0"/><rect x="3" y="2" width="10" height="2" fill="#2a90f0"/><path d="M8 5v7M6 7l2-2 2 2M6 10l2 2 2-2" stroke="#333" fill="none"/><path d="M1 14h14" stroke="#2a90f0" stroke-width="2.5" stroke-dasharray="2 1"/></svg><svg style="position:absolute;left:31px;top:120px;" width="7" height="4" viewBox="0 0 7 4"><path d="M0 0h7l-3.5 4z" fill="#000"/></svg><svg style="position:absolute;left:45px;top:114px;" width="16" height="16" viewBox="0 0 16 16"><path d="M2.5 5.5l4-3h7v9l-4 3h-7z" fill="none" stroke="#10a010" stroke-width="1.2"/><path d="M2.5 5.5h7v9M9.5 5.5l4-3" stroke="#10a010" fill="none"/><path d="M8 0c-2 3 2 5 0 8s2 5 0 8" stroke="#000" fill="none"/></svg><svg style="position:absolute;left:63px;top:120px;" width="7" height="4" viewBox="0 0 7 4"><path d="M0 0h7l-3.5 4z" fill="#000"/></svg><svg style="position:absolute;left:77px;top:114px;" width="16" height="16" viewBox="0 0 16 16"><circle cx="4" cy="3" r="2.5" fill="#30a0f0"/><circle cx="9" cy="2.5" r="2.3" fill="#30a0f0"/><circle cx="13" cy="6" r="2.2" fill="#30a0f0"/><circle cx="2.5" cy="9" r="2.2" fill="#a040d0"/><circle cx="6" cy="13" r="2.5" fill="#a040d0"/><circle cx="12" cy="12" r="2.6" fill="#a040d0"/></svg><svg style="position:absolute;left:95px;top:120px;" width="7" height="4" viewBox="0 0 7 4"><path d="M0 0h7l-3.5 4z" fill="#000"/></svg><svg style="position:absolute;left:110px;top:114px;" width="16" height="16" viewBox="0 0 16 16"><path d="M5 1h6M6 1v6l-3 5h10l-3-5V1" fill="#c0e8ff" stroke="#3070c0"/><path d="M3 10h10l1 2H2z" fill="#30a0e0"/><path d="M2 14h12M2 16h12" stroke="#3070c0"/></svg><svg style="position:absolute;left:127px;top:120px;" width="7" height="4" viewBox="0 0 7 4"><path d="M0 0h7l-3.5 4z" fill="#000"/></svg><svg style="position:absolute;left:142px;top:114px;" width="16" height="16" viewBox="0 0 16 16"><path d="M0 5c2-2 3 2 5 0s3 2 5 0 3 2 5 0M0 9c2-2 3 2 5 0s3 2 5 0 3 2 5 0M0 13c2-2 3 2 5 0s3 2 5 0 3 2 5 0" stroke="#30a030" fill="none" stroke-width="1.2"/></svg><svg style="position:absolute;left:159px;top:120px;" width="7" height="4" viewBox="0 0 7 4"><path d="M0 0h7l-3.5 4z" fill="#000"/></svg><svg style="position:absolute;left:173px;top:114px;" width="16" height="16" viewBox="0 0 16 16"><circle cx="4" cy="4" r="3.4" fill="#f8c040"/><circle cx="12" cy="4" r="3.4" fill="#f8c040"/><circle cx="4" cy="12" r="3.4" fill="#f8c040"/><circle cx="12" cy="12" r="3.4" fill="#f8c040"/><path d="M4 0.6000000000000001A3.4 3.4 0 0 0 4 7.4ZM12 0.6000000000000001A3.4 3.4 0 0 0 12 7.4ZM4 8.6A3.4 3.4 0 0 1 4 15.4ZM12 8.6A3.4 3.4 0 0 0 12 15.4Z" fill="#c01010"/></svg><svg style="position:absolute;left:191px;top:120px;" width="7" height="4" viewBox="0 0 7 4"><path d="M0 0h7l-3.5 4z" fill="#000"/></svg><svg style="position:absolute;left:205px;top:114px;" width="16" height="16" viewBox="0 0 16 16"><path d="M3 5c-2 2-2 6 0 9M14 5c2 2 2 6 0 9" stroke="#666" fill="none"/><path d="M3 2l3 5h5l3 6" stroke="#333" fill="none"/><circle cx="3" cy="2.5" r="2" fill="#f0c820"/><circle cx="6" cy="7" r="2" fill="#1050e0"/><circle cx="11" cy="7" r="2" fill="#1050e0"/><circle cx="14" cy="13" r="2" fill="#f0c820"/></svg><svg style="position:absolute;left:223px;top:120px;" width="7" height="4" viewBox="0 0 7 4"><path d="M0 0h7l-3.5 4z" fill="#000"/></svg><svg style="position:absolute;left:236px;top:114px;" width="16" height="16" viewBox="0 0 16 16"><rect x="0" y="0" width="16" height="16" fill="#d89878"/><path d="M2 2h2.5c1.5 0 2 1 2 2.5s-0.5 2.5-2 2.5H2zM10 2h4M10 2v5M10 4.5h3M2 9h4M4 9v5M10 9h2.5c1.5 0 1.5 2.5 0 2.5H10zM10 11.5h2.5c1.8 0 1.8 2.5 0 2.5H10zM10 9v5" stroke="#602020" stroke-width="1.2" fill="none"/><path d="M8 6v4M6 8h4" stroke="#602020" stroke-width="1.4"/></svg><svg style="position:absolute;left:255px;top:120px;" width="7" height="4" viewBox="0 0 7 4"><path d="M0 0h7l-3.5 4z" fill="#000"/></svg><svg style="position:absolute;left:270px;top:114px;" width="16" height="16" viewBox="0 0 16 16"><ellipse cx="4" cy="4.5" rx="3.2" ry="4" transform="rotate(35 4 4.5)" fill="#f0e020" stroke="#a09000" stroke-width="0.5"/><ellipse cx="12" cy="4.5" rx="3.2" ry="4" transform="rotate(35 12 4.5)" fill="#2080f0" stroke="#1040a0" stroke-width="0.5"/><ellipse cx="4" cy="11.5" rx="3.2" ry="4" transform="rotate(35 4 11.5)" fill="#2080f0" stroke="#1040a0" stroke-width="0.5"/><ellipse cx="12" cy="11.5" rx="3.2" ry="4" transform="rotate(35 12 11.5)" fill="#f0e020" stroke="#a09000" stroke-width="0.5"/></svg><svg style="position:absolute;left:287px;top:120px;" width="7" height="4" viewBox="0 0 7 4"><path d="M0 0h7l-3.5 4z" fill="#000"/></svg><svg style="position:absolute;left:301px;top:114px;" width="16" height="16" viewBox="0 0 16 16"><path d="M3 3l4 4M13 3l-4 4M3 13l4-4M13 13l-4-4M8 1v4M1 8h4M11 8h4M8 11v4" stroke="#333" fill="none"/><circle cx="3" cy="3" r="1.7" fill="#2080f0"/><circle cx="13" cy="3" r="1.7" fill="#2080f0"/><circle cx="3" cy="13" r="1.7" fill="#2080f0"/><circle cx="13" cy="13" r="1.7" fill="#2080f0"/></svg><svg style="position:absolute;left:319px;top:120px;" width="7" height="4" viewBox="0 0 7 4"><path d="M0 0h7l-3.5 4z" fill="#000"/></svg><svg style="position:absolute;left:334px;top:114px;" width="16" height="16" viewBox="0 0 16 16"><path d="M12.5 4.5c-1.5-3-10-3.5-10 3.5s7.5 6.5 9.5 4" stroke="#000" stroke-width="2.6" fill="none"/><path d="M8 8.5h5" stroke="#000" stroke-width="2"/><rect x="9.5" y="11" width="5" height="5" fill="#2040c0"/><path d="M10.5 15l1.5-3 1.5 3" stroke="#fff" stroke-width="0.6" fill="none"/></svg><svg style="position:absolute;left:351px;top:120px;" width="7" height="4" viewBox="0 0 7 4"><path d="M0 0h7l-3.5 4z" fill="#000"/></svg><svg style="position:absolute;left:365px;top:114px;" width="16" height="16" viewBox="0 0 16 16"><circle cx="8" cy="8" r="7" fill="none" stroke="#2040c0" stroke-width="1.3"/><circle cx="7" cy="9" r="2.5" fill="#c01010"/><path d="M8 8l5-5M10 3h3v3" stroke="#000" fill="none"/></svg><svg style="position:absolute;left:383px;top:120px;" width="7" height="4" viewBox="0 0 7 4"><path d="M0 0h7l-3.5 4z" fill="#000"/></svg><svg style="position:absolute;left:397px;top:114px;" width="16" height="16" viewBox="0 0 16 16"><path d="M3 2h10M3 14h10M2 3v10M14 3v10M4 3l5 5-5 5M9 8h4" stroke="#555" fill="none"/><circle cx="2" cy="2" r="1.8" fill="#20c020"/><circle cx="14" cy="2" r="1.8" fill="#20c020"/><circle cx="2" cy="14" r="1.8" fill="#20c020"/><circle cx="14" cy="14" r="1.8" fill="#20c020"/><circle cx="10" cy="8" r="1.8" fill="#20c020"/></svg><svg style="position:absolute;left:414px;top:120px;" width="7" height="4" viewBox="0 0 7 4"><path d="M0 0h7l-3.5 4z" fill="#000"/></svg><svg style="position:absolute;left:429px;top:114px;" width="16" height="16" viewBox="0 0 16 16"><rect x="0.5" y="0.5" width="15" height="15" fill="#d8d8e8" stroke="#888"/><circle cx="5" cy="5" r="3" fill="#9050c0"/><circle cx="10" cy="6" r="3" fill="#a060d0"/><circle cx="7" cy="11" r="3" fill="#8040b0"/><circle cx="12" cy="12" r="2" fill="#a060d0"/></svg><svg style="position:absolute;left:447px;top:120px;" width="7" height="4" viewBox="0 0 7 4"><path d="M0 0h7l-3.5 4z" fill="#000"/></svg><svg style="position:absolute;left:461px;top:114px;" width="16" height="16" viewBox="0 0 16 16"><rect x="0.5" y="0.5" width="15" height="15" rx="1.5" fill="#fff" stroke="#333"/><circle cx="4" cy="4" r="1.5" fill="#e03060"/><circle cx="9" cy="3" r="1.5" fill="#2060e0"/><circle cx="13" cy="5" r="1.5" fill="#d0b020"/><circle cx="3" cy="9" r="1.5" fill="#2060e0"/><circle cx="8" cy="8" r="1.5" fill="#e03060"/><circle cx="12" cy="10" r="1.5" fill="#d0b020"/><circle cx="5" cy="13" r="1.5" fill="#2060e0"/><circle cx="10" cy="13" r="1.5" fill="#e03060"/></svg><svg style="position:absolute;left:479px;top:120px;" width="7" height="4" viewBox="0 0 7 4"><path d="M0 0h7l-3.5 4z" fill="#000"/></svg><svg style="position:absolute;left:493px;top:114px;" width="16" height="16" viewBox="0 0 16 16"><path d="M5 1h6l4 4v6l-4 4H5l-4-4V5z" fill="#1030d0"/><path d="M5 1h6l4 4H9z" fill="#30c0f0"/><path d="M5 8h6" stroke="#6080ff"/></svg><svg style="position:absolute;left:511px;top:120px;" width="7" height="4" viewBox="0 0 7 4"><path d="M0 0h7l-3.5 4z" fill="#000"/></svg><svg style="position:absolute;left:525px;top:114px;" width="16" height="16" viewBox="0 0 16 16"><circle cx="8" cy="8" r="7" fill="#a8e0f0" stroke="#60b0d0"/><path d="M2 13l3-9 4 8 4-9" stroke="#2080c0" stroke-width="1.5" fill="none"/></svg><svg style="position:absolute;left:543px;top:120px;" width="7" height="4" viewBox="0 0 7 4"><path d="M0 0h7l-3.5 4z" fill="#000"/></svg><svg style="position:absolute;left:557px;top:114px;" width="16" height="16" viewBox="0 0 16 16"><path d="M3 6l7-5 2 1-7 5z" fill="#20b020"/><rect x="8" y="5" width="6" height="5" fill="#2090f0"/><path d="M2 12l4-2h6l-2 3H3z" fill="#e02020"/></svg><svg style="position:absolute;left:575px;top:120px;" width="7" height="4" viewBox="0 0 7 4"><path d="M0 0h7l-3.5 4z" fill="#000"/></svg><svg style="position:absolute;left:589px;top:114px;" width="16" height="16" viewBox="0 0 16 16"><circle cx="8" cy="8" r="7" fill="#2050a0"/><path d="M6 4l6 6-5 1z" fill="#e04050"/></svg><svg style="position:absolute;left:607px;top:120px;" width="7" height="4" viewBox="0 0 7 4"><path d="M0 0h7l-3.5 4z" fill="#000"/></svg><svg style="position:absolute;left:621px;top:114px;" width="16" height="16" viewBox="0 0 16 16"><path d="M3 2v12M6 2v12M9 2v12M12 2v12M15 2v12M2 4.5h14M2 7.5h14M2 10.5h14" stroke="#c8c8c8" stroke-width="0.8"/><path d="M1.5 1v13.5H16" stroke="#000" fill="none"/><path d="M2 13c3 0 4 0 5-5 0.6-3 1.4-6 2-6s1.4 3 2 6c1 5 2 5 5 5" stroke="#e02020" fill="none"/></svg><svg style="position:absolute;left:639px;top:120px;" width="7" height="4" viewBox="0 0 7 4"><path d="M0 0h7l-3.5 4z" fill="#000"/></svg><svg style="position:absolute;left:653px;top:114px;" width="16" height="16" viewBox="0 0 16 16"><path d="M1 3c2-2 4 1 7 1s5-3 7-1M1 13c2 2 4-1 7-1s5 3 7 1M1 6c2 1 4 1 5 2-1 1-3 1-5 2M15 6c-2 1-4 1-5 2 1 1 3 1 5 2" stroke="#10a0e8" stroke-width="2.2" fill="none"/><path d="M8 6.5l1.8 1.5-1.8 1.5-1.8-1.5z" fill="#a020d0"/></svg><svg style="position:absolute;left:671px;top:120px;" width="7" height="4" viewBox="0 0 7 4"><path d="M0 0h7l-3.5 4z" fill="#000"/></svg><svg style="position:absolute;left:685px;top:114px;" width="16" height="16" viewBox="0 0 16 16"><rect x="1" y="3" width="13" height="10" fill="#4070f0"/><path d="M1 6h13M1 9h13M5 3v10M10 3v10" stroke="#fff"/><path d="M10 0c-3 4 0 6-2 8s-1 5-3 8" stroke="#000" fill="none"/></svg><svg style="position:absolute;left:703px;top:120px;" width="7" height="4" viewBox="0 0 7 4"><path d="M0 0h7l-3.5 4z" fill="#000"/></svg><svg style="position:absolute;left:717px;top:114px;" width="16" height="16" viewBox="0 0 16 16"><circle cx="8" cy="8" r="7.2" fill="none" stroke="#40b0d0" stroke-dasharray="1.5 1.5"/><circle cx="13.30" cy="8.00" r="1.7" fill="#1a70e0"/><circle cx="11.75" cy="11.75" r="1.7" fill="#1a70e0"/><circle cx="8.00" cy="13.30" r="1.7" fill="#1a70e0"/><circle cx="4.25" cy="11.75" r="1.7" fill="#1a70e0"/><circle cx="2.70" cy="8.00" r="1.7" fill="#1a70e0"/><circle cx="4.25" cy="4.25" r="1.7" fill="#1a70e0"/><circle cx="8.00" cy="2.70" r="1.7" fill="#1a70e0"/><circle cx="11.75" cy="4.25" r="1.7" fill="#1a70e0"/><circle cx="6.3" cy="6.3" r="1.9" fill="#e81818"/><circle cx="9.7" cy="6.3" r="1.9" fill="#e81818"/><circle cx="6.3" cy="9.7" r="1.9" fill="#e81818"/><circle cx="9.7" cy="9.7" r="1.9" fill="#e81818"/><circle cx="8" cy="8" r="1.9" fill="#e81818"/></svg><svg style="position:absolute;left:735px;top:120px;" width="7" height="4" viewBox="0 0 7 4"><path d="M0 0h7l-3.5 4z" fill="#000"/></svg><div style="position:absolute;left:748px;top:108px;width:1px;height:27px;background:#a0a0a0"></div><div style="position:absolute;left:1px;top:136px;width:180px;height:1px;background:#fff"></div><div style="position:absolute;left:5px;top:141px;width:159px;height:17px;background:#bfcdda"></div><div style="position:absolute;left:8px;top:144px;font-size:12px;line-height:15px;color:#000;white-space:nowrap;letter-spacing:-0.2px">Project</div><svg style="position:absolute;left:168px;top:147px;" width="7" height="6" viewBox="0 0 7 6"><path d="M0.5 0.5l5.5 5M6 0.5l-5.5 5" stroke="#000" stroke-width="1.6"/></svg><svg style="position:absolute;left:9px;top:163px;" width="16" height="16" viewBox="0 0 16 16"><path d="M1.5 3.5h7l2 2v10h-9z" fill="#fff" stroke="#222"/><path d="M2 10h8v5H2z" fill="#f4f0b0"/><path d="M9 3c1-2 4-2 5 0l-1 1m1-1v2" fill="none" stroke="#222"/></svg><svg style="position:absolute;left:31px;top:163px;" width="16" height="16" viewBox="0 0 16 16"><path d="M2 2l12 12M13 1L2 14" stroke="#e02020" stroke-width="1.6"/></svg><svg style="position:absolute;left:54px;top:163px;" width="16" height="16" viewBox="0 0 16 16"><path d="M1.5 6.5h10v8h-10zM1.5 6.5l2-2h6l2 2" fill="none" stroke="#a0a0a0"/><path d="M13 1v5M10.5 3.5h5M11 1.5l4 4M15 1.5l-4 4" stroke="#a0a0a0"/></svg><div style="position:absolute;left:77px;top:162px;width:1px;height:18px;background:#a0a0a0"></div><svg style="position:absolute;left:85px;top:163px;" width="16" height="16" viewBox="0 0 16 16"><defs><linearGradient id="rg" x1="0" y1="0" x2="1" y2="1"><stop offset="0.3" stop-color="#fff"/><stop offset="1" stop-color="#f0f0a0"/></linearGradient></defs><path d="M1.5 0.5h8l3 3v12h-11z" fill="url(#rg)" stroke="#000"/><path d="M9.5 0.5v3h3" fill="#fff" stroke="#000"/><path d="M3.5 7.5a3.2 3.2 0 0 1 5.5-2.2l1-1v3.8H6.2l1.2-1.2a1.8 1.8 0 0 0-2.6 0.6z" fill="#10a010"/><path d="M10.5 9.5a3.2 3.2 0 0 1-5.5 2.2l-1 1V8.9h3.8l-1.2 1.2a1.8 1.8 0 0 0 2.6-0.6z" fill="#10a010"/></svg><svg style="position:absolute;left:107px;top:163px;" width="16" height="16" viewBox="0 0 16 16"><path d="M1 6.8L4.5 0.5L8 6.8M2.5 4.6H6.5" stroke="#2850e8" stroke-width="1.7" fill="none"/><path d="M1.5 9H7.5L1.5 14.2H7.8" stroke="#800080" stroke-width="1.7" fill="none"/><path d="M12.5 0.5v13" stroke="#000" stroke-width="1.2"/><path d="M10 10.5h5l-2.5 4z" fill="#000"/></svg><svg style="position:absolute;left:132px;top:169px;" width="7" height="4" viewBox="0 0 7 4"><path d="M0 0h7l-3.5 4z" fill="#000"/></svg><div style="position:absolute;left:147px;top:162px;width:1px;height:18px;background:#a0a0a0"></div><svg style="position:absolute;left:154px;top:163px;" width="16" height="16" viewBox="0 0 16 16"><path d="M1.5 4.5l5.5-2 1.5 10.5-5.5 2z" fill="#f8f0c8" stroke="#0a6a0a"/><path d="M7 2.5l6.5 1 1.5 10.5-6.5-1z" fill="#fff8d8" stroke="#0a6a0a"/><path d="M2.5 15.5l6-2.5 6.5 2" stroke="#0a500a" stroke-width="1.6" fill="none"/><path d="M2 5l4-1.5" stroke="#30a030"/></svg><div style="position:absolute;left:5px;top:184px;width:172px;height:598px;background:#fff;border-top:1px solid #a0a0a0;border-left:1px solid #a0a0a0;border-right:1px solid #fff;border-bottom:1px solid #fff;box-sizing:border-box"></div><div style="position:absolute;left:6px;top:185px;width:170px;height:596px;border-top:1px solid #696969;border-left:1px solid #696969;border-right:1px solid #e3e3e3;border-bottom:1px solid #e3e3e3;box-sizing:border-box"></div><svg style="position:absolute;left:7px;top:187px;" width="16" height="16" viewBox="0 0 16 16"><rect x="0.5" y="0.5" width="15" height="15" fill="#fff" stroke="#2a5b9a"/><path d="M2 2H14V14H11V5H2Z" fill="#0e8ef2"/><path d="M2 6H10V14H7.5V8.5H2Z" fill="#2a64a8"/><path d="M2 10.5H6V14H2Z" fill="#000"/></svg><div style="position:absolute;left:28px;top:188px;font-size:12px;line-height:15px;color:#000;white-space:nowrap;">AlAs</div><svg style="position:absolute;left:15px;top:204px;" width="12" height="12" viewBox="0 0 12 12"><rect x="0" y="0" width="1" height="1" fill="#777"/><rect x="0" y="2" width="1" height="1" fill="#777"/><rect x="0" y="4" width="1" height="1" fill="#777"/><rect x="0" y="6" width="1" height="1" fill="#777"/><rect x="0" y="8" width="1" height="1" fill="#777"/><rect x="0" y="10" width="1" height="1" fill="#777"/><rect x="2" y="10" width="1" height="1" fill="#777"/><rect x="4" y="10" width="1" height="1" fill="#777"/><rect x="6" y="10" width="1" height="1" fill="#777"/><rect x="8" y="10" width="1" height="1" fill="#777"/><rect x="10" y="10" width="1" height="1" fill="#777"/></svg><svg style="position:absolute;left:26px;top:204px;" width="16" height="16" viewBox="0 0 16 16"><path d="M5 6L10 6.8L9.8 10.6L4.3 11.6Z" fill="#bbb"/><circle cx="5.6" cy="6.6" r="1.9" fill="#222"/><circle cx="10.6" cy="7.3999999999999995" r="1.9" fill="#222"/><circle cx="4.8999999999999995" cy="12.2" r="1.9" fill="#222"/><circle cx="10.4" cy="11.2" r="1.9" fill="#222"/><circle cx="3.4" cy="3.3000000000000003" r="1.9" fill="#222"/><circle cx="9.2" cy="4.0" r="1.9" fill="#222"/><circle cx="2.5" cy="8.4" r="1.9" fill="#222"/><circle cx="13.6" cy="11.6" r="1.9" fill="#222"/><circle cx="10.299999999999999" cy="14.6" r="1.9" fill="#222"/><circle cx="5" cy="6" r="1.6" fill="#f4f4f4" stroke="#909090" stroke-width="0.7"/><circle cx="10" cy="6.8" r="1.6" fill="#f4f4f4" stroke="#909090" stroke-width="0.7"/><circle cx="4.3" cy="11.6" r="1.6" fill="#f4f4f4" stroke="#909090" stroke-width="0.7"/><circle cx="9.8" cy="10.6" r="1.6" fill="#f4f4f4" stroke="#909090" stroke-width="0.7"/><circle cx="2.8" cy="2.7" r="1.7" fill="#f00000"/><circle cx="8.6" cy="3.4" r="1.7" fill="#f00000"/><circle cx="1.9" cy="7.8" r="1.7" fill="#1878f0"/><circle cx="13" cy="11" r="1.7" fill="#1878f0"/><circle cx="9.7" cy="14" r="1.7" fill="#f00000"/><circle cx="6.8" cy="7.6" r="0.8" fill="#30c0f0"/></svg><div style="position:absolute;left:45px;top:204px;width:49px;height:18px;background:#e8e8e8"></div><div style="position:absolute;left:47px;top:206px;font-size:12px;line-height:15px;color:#000;white-space:nowrap;">AlAs.xsd</div><div style="position:absolute;left:181px;top:136px;width:884px;height:514px;background:#ababab;border-left:1px solid #a0a0a0;box-sizing:border-box"></div><div style="position:absolute;left:182px;top:136px;width:883px;height:514px;border-left:1px solid #696969;border-top:1px solid #696969;box-sizing:border-box"></div><div style="position:absolute;left:1065px;top:135px;width:2px;height:516px;background:#fff"></div><div style="position:absolute;left:182px;top:650px;width:884px;height:1px;background:#fff"></div><div style="position:absolute;left:195px;top:147px;width:785px;height:465px;box-sizing:border-box;border:1px solid #3a3a3a;border-radius:6px 6px 0 0;background:linear-gradient(#98b4d4 0px,#a8c2e0 20px,#bcd3eb 34px,#bed4ec 100%);box-shadow:inset 1px 1px 0 #fff"></div><div style="position:absolute;left:978px;top:160px;width:1px;height:451px;background:#38d8fc"></div><div style="position:absolute;left:196px;top:610px;width:783px;height:1px;background:#38d8fc"></div><svg style="position:absolute;left:205px;top:157px;" width="16" height="16" viewBox="0 0 16 16"><path d="M5 6L10 6.8L9.8 10.6L4.3 11.6Z" fill="#bbb"/><circle cx="5.6" cy="6.6" r="1.9" fill="#222"/><circle cx="10.6" cy="7.3999999999999995" r="1.9" fill="#222"/><circle cx="4.8999999999999995" cy="12.2" r="1.9" fill="#222"/><circle cx="10.4" cy="11.2" r="1.9" fill="#222"/><circle cx="3.4" cy="3.3000000000000003" r="1.9" fill="#222"/><circle cx="9.2" cy="4.0" r="1.9" fill="#222"/><circle cx="2.5" cy="8.4" r="1.9" fill="#222"/><circle cx="13.6" cy="11.6" r="1.9" fill="#222"/><circle cx="10.299999999999999" cy="14.6" r="1.9" fill="#222"/><circle cx="5" cy="6" r="1.6" fill="#f4f4f4" stroke="#909090" stroke-width="0.7"/><circle cx="10" cy="6.8" r="1.6" fill="#f4f4f4" stroke="#909090" stroke-width="0.7"/><circle cx="4.3" cy="11.6" r="1.6" fill="#f4f4f4" stroke="#909090" stroke-width="0.7"/><circle cx="9.8" cy="10.6" r="1.6" fill="#f4f4f4" stroke="#909090" stroke-width="0.7"/><circle cx="2.8" cy="2.7" r="1.7" fill="#f00000"/><circle cx="8.6" cy="3.4" r="1.7" fill="#f00000"/><circle cx="1.9" cy="7.8" r="1.7" fill="#1878f0"/><circle cx="13" cy="11" r="1.7" fill="#1878f0"/><circle cx="9.7" cy="14" r="1.7" fill="#f00000"/><circle cx="6.8" cy="7.6" r="0.8" fill="#30c0f0"/></svg><div style="position:absolute;left:225px;top:160px;font-size:12px;line-height:15px;color:#000;white-space:nowrap;">AlAs.xsd *</div><div style="position:absolute;left:870px;top:157px;width:32px;height:18px;box-sizing:border-box;border:1px solid #6a7c98;border-radius:2px;background:linear-gradient(#dbe6f4 0px,#c8d8ec 8px,#a8c0dc 9px,#b8cee6 17px)"></div><div style="position:absolute;left:904px;top:157px;width:32px;height:18px;box-sizing:border-box;border:1px solid #6a7c98;border-radius:2px;background:linear-gradient(#dbe6f4 0px,#c8d8ec 8px,#a8c0dc 9px,#b8cee6 17px)"></div><div style="position:absolute;left:938px;top:157px;width:32px;height:18px;box-sizing:border-box;border:1px solid #5a1a1a;border-radius:2px;background:linear-gradient(#e8a090 0px,#d87060 8px,#c03820 9px,#c84a30 17px)"></div><svg style="position:absolute;left:880px;top:165px;" width="11" height="5" viewBox="0 0 11 5"><rect x="0.5" y="0.5" width="10" height="4" rx="1" fill="#f4f4f4" stroke="#444"/></svg><svg style="position:absolute;left:914px;top:161px;" width="10" height="9" viewBox="0 0 10 9"><rect x="0.5" y="0.5" width="9" height="8" rx="1" fill="#f0f0f0" stroke="#444"/><rect x="2.5" y="2.5" width="5" height="3" fill="#8aa0c0" stroke="#444" stroke-width="0.6"/></svg><svg style="position:absolute;left:947px;top:160px;" width="13" height="11" viewBox="0 0 13 11"><path d="M2 1.5l9 8M11 1.5l-9 8" stroke="#5a3030" stroke-width="4.2"/><path d="M2 1.5l9 8M11 1.5l-9 8" stroke="#ececec" stroke-width="2.4"/></svg><div style="position:absolute;left:203px;top:178px;width:769px;height:426px;background:#fff"></div><div style="position:absolute;left:203px;top:178px;width:767px;height:1px;background:#a8a4a0"></div><div style="position:absolute;left:203px;top:178px;width:1px;height:424px;background:#a8a4a0"></div><div style="position:absolute;left:204px;top:179px;width:766px;height:1px;background:#505050"></div><div style="position:absolute;left:204px;top:179px;width:1px;height:423px;background:#505050"></div><div style="position:absolute;left:205px;top:180px;width:765px;height:422px;background:#000"></div><svg style="position:absolute;left:0;top:0" width="1072" height="802" viewBox="0 0 1072 802"><path d="M490.0 293.3H685.0V488.3H490.0Z" fill="none" stroke="#e8e8e8" stroke-width="2.6"/><path d="M492.8 279.5V290.5H497.5L499.8 288.3V286.5L497.8 284.6H492.8M497.5 284.6L499.3 282.8V281.3L497.6 279.5H492.8" fill="none" stroke="#f0f000" stroke-width="1"/><path d="M688.3 488.8L693.6 477.2L698.9 488.8M690.5 485.3H696.5" fill="none" stroke="#ff0000" stroke-width="1"/><line x1="466.00" y1="269.30" x2="709.00" y2="512.30" stroke="#f062f6" stroke-width="2"/><line x1="563.50" y1="269.30" x2="709.00" y2="414.80" stroke="#f062f6" stroke-width="2"/><line x1="466.00" y1="366.80" x2="611.50" y2="512.30" stroke="#f062f6" stroke-width="2"/><line x1="661.00" y1="269.30" x2="709.00" y2="317.30" stroke="#f062f6" stroke-width="2"/><line x1="466.00" y1="464.30" x2="514.00" y2="512.30" stroke="#f062f6" stroke-width="2"/><line x1="466.00" y1="512.30" x2="709.00" y2="269.30" stroke="#f062f6" stroke-width="2"/><line x1="466.00" y1="414.80" x2="611.50" y2="269.30" stroke="#f062f6" stroke-width="2"/><line x1="563.50" y1="512.30" x2="709.00" y2="366.80" stroke="#f062f6" stroke-width="2"/><line x1="466.00" y1="317.30" x2="514.00" y2="269.30" stroke="#f062f6" stroke-width="2"/><line x1="661.00" y1="512.30" x2="709.00" y2="464.30" stroke="#f062f6" stroke-width="2"/><line x1="514.17" y1="317.48" x2="563.33" y2="366.62" stroke="#b880dc" stroke-width="2"/><line x1="514.17" y1="366.62" x2="563.33" y2="317.48" stroke="#b880dc" stroke-width="2"/><line x1="611.67" y1="317.48" x2="660.83" y2="366.62" stroke="#b880dc" stroke-width="2"/><line x1="611.67" y1="366.62" x2="660.83" y2="317.48" stroke="#b880dc" stroke-width="2"/><line x1="514.17" y1="414.98" x2="563.33" y2="464.12" stroke="#b880dc" stroke-width="2"/><line x1="514.17" y1="464.12" x2="563.33" y2="414.98" stroke="#b880dc" stroke-width="2"/><line x1="611.67" y1="414.98" x2="660.83" y2="464.12" stroke="#b880dc" stroke-width="2"/><line x1="611.67" y1="464.12" x2="660.83" y2="414.98" stroke="#b880dc" stroke-width="2"/><g><path d="M499.70 483.53L497.53 485.70" stroke="#00e000" stroke-width="1.3"/><path d="M497.53 485.70L494.47 485.70" stroke="#00e000" stroke-width="1.3"/><path d="M494.47 485.70L492.30 483.53" stroke="#00e000" stroke-width="1.3"/><path d="M492.30 483.53L492.30 480.47" stroke="#00e000" stroke-width="1.3"/><path d="M492.30 480.47L494.47 478.30" stroke="#00e000" stroke-width="1.3"/><path d="M494.47 478.30L497.53 478.30" stroke="#00e000" stroke-width="1.3"/><path d="M499.70 480.47L499.70 483.53" stroke="#00e000" stroke-width="1.3"/></g><circle cx="499" cy="479.5" r="4.3" fill="none" stroke="#e0e0e0" stroke-width="0.9"/><path d="M929.5 566V552" stroke="#f0f0f0" stroke-width="1.2"/><path d="M929.5 544l3.2 9.5h-6.4z" fill="#00d000"/><path d="M929.5 552v14" stroke="#00d000" stroke-width="1.2"/><path d="M931 567H945" stroke="#e0e0e0" stroke-width="1.8"/><path d="M953 567l-10 -3.2v6.4z" fill="#e0e0e0"/><circle cx="929.7" cy="566.8" r="3.4" fill="#700070" stroke="#f0f0f0" stroke-width="1"/><path d="M926 558.5h7l-6.5 8h7" fill="none" stroke="#f000f0" stroke-width="1"/><path d="M926 527.5l3.5 4 3.5-4M929.5 531.5v4.5" fill="none" stroke="#00d000" stroke-width="1"/><path d="M958 558.5l7 8M965 558.5l-7 8" fill="none" stroke="#f0f0f0" stroke-width="1"/></svg><svg style="position:absolute;left:186px;top:659px;" width="7" height="6" viewBox="0 0 7 6"><path d="M0.5 0.5l6 5M6.5 0.5l-6 5" stroke="#000" stroke-width="1.6"/></svg><div style="position:absolute;left:181px;top:668px;width:17px;height:114px;background:#bfcdda"></div><div style="position:absolute;left:182px;top:782px;width:114px;height:17px;transform-origin:0 0;transform:rotate(-90deg);font-size:12px;line-height:17px;text-indent:8px;letter-spacing:-1px;white-space:nowrap">Jobs</div><svg style="position:absolute;left:203px;top:655px;" width="16" height="6" viewBox="0 0 16 6"><path d="M0.5 0v4.5h15V0" fill="#fff" stroke="#222"/><path d="M3 2h2M7 2h2M11 2h2" stroke="#2040e0" stroke-width="1.5"/></svg><svg style="position:absolute;left:203px;top:667px;" width="16" height="16" viewBox="0 0 16 16"><defs><linearGradient id="rg" x1="0" y1="0" x2="1" y2="1"><stop offset="0.3" stop-color="#fff"/><stop offset="1" stop-color="#f0f0a0"/></linearGradient></defs><path d="M1.5 0.5h8l3 3v12h-11z" fill="url(#rg)" stroke="#000"/><path d="M9.5 0.5v3h3" fill="#fff" stroke="#000"/><path d="M3.5 7.5a3.2 3.2 0 0 1 5.5-2.2l1-1v3.8H6.2l1.2-1.2a1.8 1.8 0 0 0-2.6 0.6z" fill="#10a010"/><path d="M10.5 9.5a3.2 3.2 0 0 1-5.5 2.2l-1 1V8.9h3.8l-1.2 1.2a1.8 1.8 0 0 0 2.6-0.6z" fill="#10a010"/></svg><div style="position:absolute;left:202px;top:689px;width:34px;height:1px;background:#a0a0a0"></div><div style="position:absolute;left:202px;top:690px;width:34px;height:1px;background:#fff"></div><svg style="position:absolute;left:203px;top:696px;" width="16" height="16" viewBox="0 0 16 16"><path d="M1.5 5.5v9h10v-6" fill="none" stroke="#a0a0a0"/><path d="M3 9.5h3M3 12.5h6M7 9.5h2" stroke="#a0a0a0"/><path d="M4.5 5.5l5-4 4 3-4 4z" fill="none" stroke="#a0a0a0"/><path d="M14.5 1v3" stroke="#a0a0a0"/></svg><svg style="position:absolute;left:203px;top:719px;" width="16" height="16" viewBox="0 0 16 16"><rect x="2.5" y="3.5" width="11" height="12" rx="2" fill="none" stroke="#a0a0a0"/><path d="M5.5 3.5v-2h5v2M2.5 9h11" stroke="#a0a0a0" fill="none"/><circle cx="8" cy="9" r="2" fill="none" stroke="#a0a0a0"/></svg><svg style="position:absolute;left:203px;top:741px;" width="16" height="16" viewBox="0 0 16 16"><path d="M5.5 9.5V3.5a1 1 0 0 1 2 0V8V2a1 1 0 0 1 2 0V8V3a1 1 0 0 1 2 0V8.5V5a1 1 0 0 1 2 0V11c0 3-2 4.5-4.5 4.5c-2 0-3-1-4.5-3l-2.5-3c-0.5-1 0.5-2 1.5-1.5z" fill="none" stroke="#a0a0a0"/></svg><svg style="position:absolute;left:203px;top:762px;" width="16" height="16" viewBox="0 0 16 16"><rect x="3.5" y="1.5" width="11" height="10" fill="none" stroke="#a0a0a0"/><path d="M3.5 2.5h11" stroke="#a0a0a0" stroke-width="2"/><path d="M5 10l4-4M7 5.5h3v3" stroke="#a0a0a0" fill="none"/><circle cx="3" cy="13.5" r="1.8" fill="none" stroke="#a0a0a0"/><circle cx="8" cy="13.5" r="1.8" fill="none" stroke="#a0a0a0"/></svg><div style="position:absolute;left:240px;top:656px;width:826px;height:126px;background:#fff;border-left:1px solid #a0a0a0;border-top:1px solid #a0a0a0;box-sizing:border-box"></div><div style="position:absolute;left:241px;top:657px;width:825px;height:125px;border-left:1px solid #696969;border-top:1px solid #696969;box-sizing:border-box"></div><div style="position:absolute;left:242px;top:780px;width:823px;height:1px;background:#e3e3e3"></div><div style="position:absolute;left:242px;top:658px;width:823px;height:17px;background:#f0f0f0;border-left:1px solid #fff;border-top:1px solid #fff;border-bottom:1px solid #e3e3e3;box-sizing:border-box"></div><div style="position:absolute;left:242px;top:675px;width:823px;height:2px;background:#696969"></div><div style="position:absolute;left:315px;top:658px;width:1px;height:17px;background:#e3e3e3"></div><div style="position:absolute;left:316px;top:658px;width:1px;height:17px;background:#696969"></div><div style="position:absolute;left:317px;top:658px;width:1px;height:17px;background:#fff"></div><div style="position:absolute;left:248px;top:661px;width:66px;overflow:hidden;font-size:12px;line-height:15px;white-space:nowrap;letter-spacing:-0.2px">Description</div><div style="position:absolute;left:390px;top:658px;width:1px;height:17px;background:#e3e3e3"></div><div style="position:absolute;left:391px;top:658px;width:1px;height:17px;background:#696969"></div><div style="position:absolute;left:392px;top:658px;width:1px;height:17px;background:#fff"></div><div style="position:absolute;left:323px;top:661px;width:66px;overflow:hidden;font-size:12px;line-height:15px;white-space:nowrap;letter-spacing:-0.2px">Job Id</div><div style="position:absolute;left:465px;top:658px;width:1px;height:17px;background:#e3e3e3"></div><div style="position:absolute;left:466px;top:658px;width:1px;height:17px;background:#696969"></div><div style="position:absolute;left:467px;top:658px;width:1px;height:17px;background:#fff"></div><div style="position:absolute;left:398px;top:661px;width:66px;overflow:hidden;font-size:12px;line-height:15px;white-space:nowrap;letter-spacing:-0.2px">Gateway</div><div style="position:absolute;left:540px;top:658px;width:1px;height:17px;background:#e3e3e3"></div><div style="position:absolute;left:541px;top:658px;width:1px;height:17px;background:#696969"></div><div style="position:absolute;left:542px;top:658px;width:1px;height:17px;background:#fff"></div><div style="position:absolute;left:473px;top:661px;width:66px;overflow:hidden;font-size:12px;line-height:15px;white-space:nowrap;letter-spacing:-0.2px">Server</div><div style="position:absolute;left:615px;top:658px;width:1px;height:17px;background:#e3e3e3"></div><div style="position:absolute;left:616px;top:658px;width:1px;height:17px;background:#696969"></div><div style="position:absolute;left:617px;top:658px;width:1px;height:17px;background:#fff"></div><div style="position:absolute;left:548px;top:661px;width:66px;overflow:hidden;font-size:12px;line-height:15px;white-space:nowrap;letter-spacing:-0.2px">Status</div><div style="position:absolute;left:690px;top:658px;width:1px;height:17px;background:#e3e3e3"></div><div style="position:absolute;left:691px;top:658px;width:1px;height:17px;background:#696969"></div><div style="position:absolute;left:692px;top:658px;width:1px;height:17px;background:#fff"></div><div style="position:absolute;left:623px;top:661px;width:66px;overflow:hidden;font-size:12px;line-height:15px;white-space:nowrap;letter-spacing:-0.2px">Progress</div><div style="position:absolute;left:765px;top:658px;width:1px;height:17px;background:#e3e3e3"></div><div style="position:absolute;left:766px;top:658px;width:1px;height:17px;background:#696969"></div><div style="position:absolute;left:767px;top:658px;width:1px;height:17px;background:#fff"></div><div style="position:absolute;left:698px;top:661px;width:66px;overflow:hidden;font-size:12px;line-height:15px;white-space:nowrap;letter-spacing:-0.2px">Start Time</div><div style="position:absolute;left:840px;top:658px;width:1px;height:17px;background:#e3e3e3"></div><div style="position:absolute;left:841px;top:658px;width:1px;height:17px;background:#696969"></div><div style="position:absolute;left:842px;top:658px;width:1px;height:17px;background:#fff"></div><div style="position:absolute;left:773px;top:661px;width:66px;overflow:hidden;font-size:12px;line-height:15px;white-space:nowrap;letter-spacing:-0.2px">Results Fo...</div><div style="position:absolute;left:1065px;top:656px;width:1px;height:126px;background:#fff"></div><div style="position:absolute;left:3px;top:786px;font-size:12px;line-height:15px;color:#000;white-space:nowrap;letter-spacing:-0.6px">Ready</div><div style="position:absolute;left:818px;top:784px;width:133px;height:17px;border-left:1px solid #a0a0a0;border-top:1px solid #a0a0a0;border-right:1px solid #fff;box-sizing:border-box"></div><div style="position:absolute;left:954px;top:784px;width:27px;height:17px;border-left:1px solid #a0a0a0;border-top:1px solid #a0a0a0;border-right:1px solid #fff;box-sizing:border-box"></div><div style="position:absolute;left:984px;top:784px;width:33px;height:17px;border-left:1px solid #a0a0a0;border-top:1px solid #a0a0a0;border-right:1px solid #fff;box-sizing:border-box"></div><div style="position:absolute;left:1020px;top:784px;width:31px;height:17px;border-left:1px solid #a0a0a0;border-top:1px solid #a0a0a0;border-right:1px solid #fff;box-sizing:border-box"></div><div style="position:absolute;left:986px;top:786px;font-size:12px;line-height:15px;color:#000;white-space:nowrap;">NUM</div><svg style="position:absolute;left:1056px;top:786px;" width="14" height="14" viewBox="0 0 14 14"><path d="M3.5 13.5L13.5 3.5M7.5 13.5L13.5 7.5M11.5 13.5L13.5 11.5" stroke="#fff" stroke-width="1.2" transform="translate(-0.8,-0.8)"/><path d="M3.5 13.5L13.5 3.5M7.5 13.5L13.5 7.5M11.5 13.5L13.5 11.5" stroke="#9a9a9a" stroke-width="1.5"/></svg>
</body></html>
